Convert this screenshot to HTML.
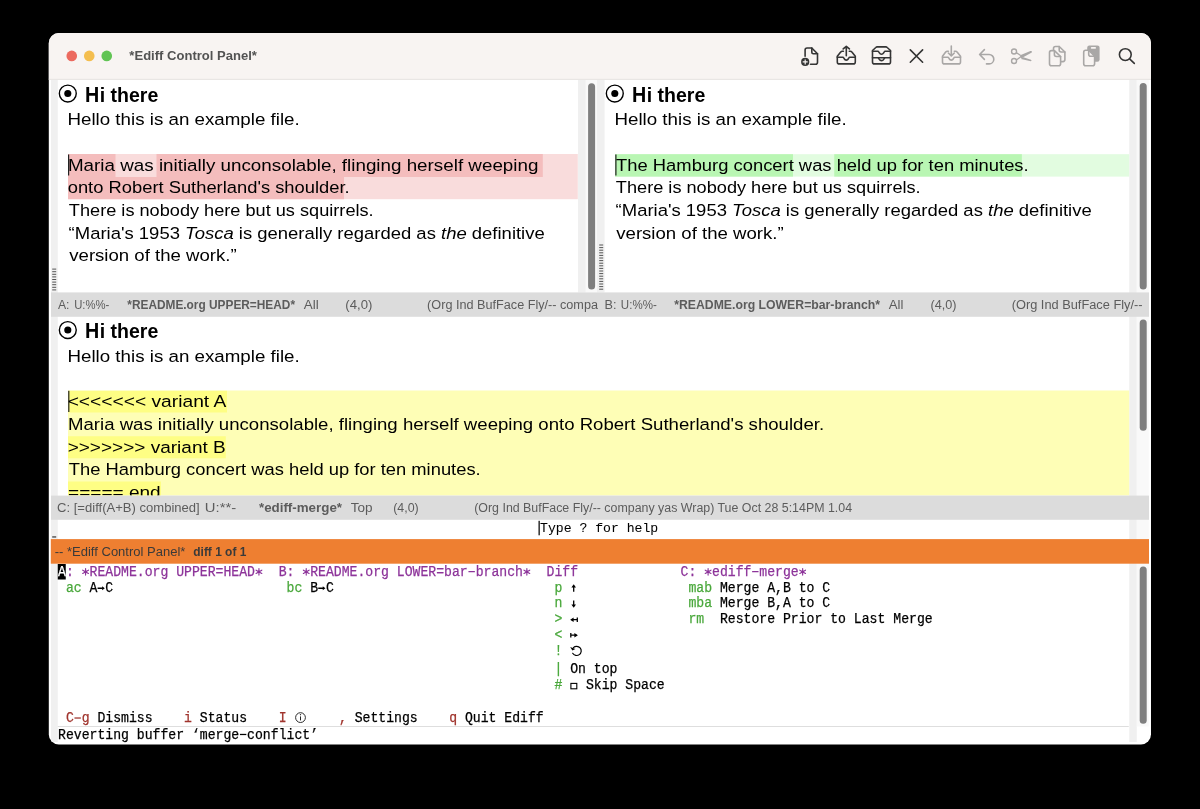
<!DOCTYPE html>
<html><head><meta charset="utf-8"><style>
html,body{margin:0;padding:0;background:#000;width:1200px;height:809px;overflow:hidden}
svg{display:block}
#wrap{will-change:transform;width:1200px;height:809px}
text{font-family:"Liberation Sans",sans-serif}
text.m{font-family:"Liberation Mono",monospace;white-space:pre}
</style></head><body>
<div id="wrap"><svg width="1200" height="809" viewBox="0 0 1200 809">
<rect x="0" y="0" width="1200" height="809" fill="#000"/>
<clipPath id="win"><rect x="48.8" y="33" width="1102.2" height="711.5" rx="10" ry="10"/></clipPath>
<g clip-path="url(#win)">
<rect x="48" y="33" width="1104" height="712" fill="#ffffff" />
<rect x="48" y="33" width="1104" height="46.5" fill="#f8f4f2" />
<rect x="48" y="78.8" width="1104" height="1.2" fill="#e9e6e4" />
<circle cx="71.75" cy="55.9" r="5.3" fill="#ec6a5f"/>
<circle cx="89.25" cy="55.9" r="5.3" fill="#f4be4f"/>
<circle cx="106.75" cy="55.9" r="5.3" fill="#61c454"/>
<text x="129.36" y="60" font-size="13" fill="#535353" textLength="127.55" lengthAdjust="spacingAndGlyphs" ><tspan font-weight="bold">*Ediff Control Panel*</tspan></text>
<rect x="51" y="80" width="6.8" height="662" fill="#f0f0f0" />
<rect x="578" y="80" width="7.8" height="212.5" fill="#f0f0f0" />
<rect x="585.8" y="80" width="11.2" height="212.5" fill="#f9f9f9" />
<rect x="597" y="80" width="7.6" height="212.5" fill="#f0f0f0" />
<rect x="1129.2" y="80" width="7.6" height="662" fill="#f0f0f0" />
<rect x="1136.8" y="80" width="12" height="646.5" fill="#f9f9f9" />
<rect x="68" y="154" width="509.8" height="45.2" fill="#f9dcdc" />
<rect x="68" y="154" width="474.8" height="23" fill="#f4bdbd" />
<rect x="115.5" y="154" width="41" height="23" fill="#f9dcdc" />
<rect x="68" y="177" width="276" height="22.2" fill="#f4bdbd" />
<rect x="615" y="154.2" width="514.2" height="22.4" fill="#e2fce0" />
<rect x="615" y="154.2" width="178" height="22.4" fill="#b9f6b3" />
<rect x="834.25" y="154.2" width="187.6" height="22.4" fill="#b9f6b3" />
<rect x="68" y="154.5" width="1.2" height="21" fill="#222" />
<rect x="615.3" y="154.5" width="1.2" height="21" fill="#222" />
<circle cx="67.8" cy="93.55" r="8.45" fill="none" stroke="#000" stroke-width="1.4"/>
<circle cx="67.8" cy="93.55" r="3.55" fill="#000"/>
<text x="85.08" y="101.9" font-size="22.4" fill="#000" textLength="14.25" lengthAdjust="spacingAndGlyphs" ><tspan font-weight="bold">H</tspan></text>
<text x="99.64" y="101.9" font-size="20.6" fill="#000" textLength="58.63" lengthAdjust="spacingAndGlyphs" ><tspan font-weight="bold">i there</tspan></text>
<text x="67.46" y="125" font-size="17.4" fill="#000" textLength="232.25" lengthAdjust="spacingAndGlyphs" >Hello this is an example file.</text>
<text x="67.96" y="170.5" font-size="17.4" fill="#000" textLength="470.46" lengthAdjust="spacingAndGlyphs" >Maria was initially unconsolable, flinging herself weeping</text>
<text x="67.73" y="193.2" font-size="17.4" fill="#000" textLength="281.94" lengthAdjust="spacingAndGlyphs" >onto Robert Sutherland&#x27;s shoulder.</text>
<text x="68.89" y="215.8" font-size="17.4" fill="#000" textLength="304.77" lengthAdjust="spacingAndGlyphs" >There is nobody here but us squirrels.</text>
<text x="68.63" y="238.7" font-size="17.4" fill="#000" textLength="476.09" lengthAdjust="spacingAndGlyphs" >“Maria&#x27;s 1953 <tspan font-style="italic">Tosca</tspan> is generally regarded as <tspan font-style="italic">the</tspan> definitive</text>
<text x="69.24" y="260.8" font-size="17.4" fill="#000" textLength="167.44" lengthAdjust="spacingAndGlyphs" >version of the work.”</text>
<circle cx="614.8" cy="93.55" r="8.45" fill="none" stroke="#000" stroke-width="1.4"/>
<circle cx="614.8" cy="93.55" r="3.55" fill="#000"/>
<text x="632.08" y="101.9" font-size="22.4" fill="#000" textLength="14.25" lengthAdjust="spacingAndGlyphs" ><tspan font-weight="bold">H</tspan></text>
<text x="646.64" y="101.9" font-size="20.6" fill="#000" textLength="58.63" lengthAdjust="spacingAndGlyphs" ><tspan font-weight="bold">i there</tspan></text>
<text x="614.46" y="125" font-size="17.4" fill="#000" textLength="232.25" lengthAdjust="spacingAndGlyphs" >Hello this is an example file.</text>
<text x="616.09" y="170.5" font-size="17.4" fill="#000" textLength="412.59" lengthAdjust="spacingAndGlyphs" >The Hamburg concert was held up for ten minutes.</text>
<text x="615.89" y="193.2" font-size="17.4" fill="#000" textLength="304.77" lengthAdjust="spacingAndGlyphs" >There is nobody here but us squirrels.</text>
<text x="615.63" y="215.8" font-size="17.4" fill="#000" textLength="476.09" lengthAdjust="spacingAndGlyphs" >“Maria&#x27;s 1953 <tspan font-style="italic">Tosca</tspan> is generally regarded as <tspan font-style="italic">the</tspan> definitive</text>
<text x="616.24" y="238.7" font-size="17.4" fill="#000" textLength="167.44" lengthAdjust="spacingAndGlyphs" >version of the work.”</text>
<rect x="52.2" y="268.6" width="4" height="1" fill="#555" />
<rect x="52.2" y="271.2" width="4" height="1" fill="#555" />
<rect x="52.2" y="273.8" width="4" height="1" fill="#555" />
<rect x="52.2" y="276.4" width="4" height="1" fill="#555" />
<rect x="52.2" y="279.0" width="4" height="1" fill="#555" />
<rect x="52.2" y="281.6" width="4" height="1" fill="#555" />
<rect x="52.2" y="284.2" width="4" height="1" fill="#555" />
<rect x="52.2" y="286.8" width="4" height="1" fill="#555" />
<rect x="52.2" y="289.4" width="4" height="1" fill="#555" />
<rect x="599.2" y="244.5" width="4" height="1" fill="#555" />
<rect x="599.2" y="247.1" width="4" height="1" fill="#555" />
<rect x="599.2" y="249.7" width="4" height="1" fill="#555" />
<rect x="599.2" y="252.3" width="4" height="1" fill="#555" />
<rect x="599.2" y="254.9" width="4" height="1" fill="#555" />
<rect x="599.2" y="257.5" width="4" height="1" fill="#555" />
<rect x="599.2" y="260.1" width="4" height="1" fill="#555" />
<rect x="599.2" y="262.7" width="4" height="1" fill="#555" />
<rect x="599.2" y="265.3" width="4" height="1" fill="#555" />
<rect x="599.2" y="267.9" width="4" height="1" fill="#555" />
<rect x="599.2" y="270.5" width="4" height="1" fill="#555" />
<rect x="599.2" y="273.1" width="4" height="1" fill="#555" />
<rect x="599.2" y="275.7" width="4" height="1" fill="#555" />
<rect x="599.2" y="278.3" width="4" height="1" fill="#555" />
<rect x="599.2" y="280.9" width="4" height="1" fill="#555" />
<rect x="599.2" y="283.5" width="4" height="1" fill="#555" />
<rect x="599.2" y="286.1" width="4" height="1" fill="#555" />
<rect x="599.2" y="288.7" width="4" height="1" fill="#555" />
<rect x="588.1" y="83.2" width="7" height="206.3" rx="3.5" fill="#7f7f7f"/>
<rect x="1139.7" y="83" width="7" height="206.60000000000002" rx="3.5" fill="#7f7f7f"/>
<rect x="1139.7" y="319.6" width="7" height="111.19999999999999" rx="3.5" fill="#7f7f7f"/>
<rect x="1139.7" y="566.5" width="7" height="157.29999999999995" rx="3.5" fill="#7f7f7f"/>
<rect x="51" y="292.4" width="1098" height="24.4" fill="#dcdcdc" />
<text x="57.98" y="308.75" font-size="12" fill="#5c5c5c" textLength="11.54" lengthAdjust="spacingAndGlyphs" >A:</text>
<text x="74.13" y="308.75" font-size="12" fill="#5c5c5c" textLength="35.17" lengthAdjust="spacingAndGlyphs" >U:%%-</text>
<text x="127.32" y="308.75" font-size="12" fill="#5c5c5c" textLength="167.70" lengthAdjust="spacingAndGlyphs" ><tspan font-weight="bold">*README.org UPPER=HEAD*</tspan></text>
<text x="303.77" y="308.75" font-size="12" fill="#5c5c5c" textLength="14.92" lengthAdjust="spacingAndGlyphs" >All</text>
<text x="345.38" y="308.75" font-size="12" fill="#5c5c5c" textLength="27.03" lengthAdjust="spacingAndGlyphs" >(4,0)</text>
<clipPath id="mlA"><rect x="51" y="292" width="547" height="25"/></clipPath>
<text x="427.12" y="308.75" font-size="12" fill="#5c5c5c" textLength="170.88" lengthAdjust="spacingAndGlyphs" clip-path="url(#mlA)">(Org Ind BufFace Fly/-- compa</text>
<text x="604.46" y="308.75" font-size="12" fill="#5c5c5c" textLength="11.94" lengthAdjust="spacingAndGlyphs" >B:</text>
<text x="620.86" y="308.75" font-size="12" fill="#5c5c5c" textLength="35.90" lengthAdjust="spacingAndGlyphs" >U:%%-</text>
<text x="674.21" y="308.75" font-size="12" fill="#5c5c5c" textLength="205.80" lengthAdjust="spacingAndGlyphs" ><tspan font-weight="bold">*README.org LOWER=bar-branch*</tspan></text>
<text x="888.72" y="308.75" font-size="12" fill="#5c5c5c" textLength="14.66" lengthAdjust="spacingAndGlyphs" >All</text>
<text x="930.46" y="308.75" font-size="12" fill="#5c5c5c" textLength="26.07" lengthAdjust="spacingAndGlyphs" >(4,0)</text>
<text x="1011.71" y="308.75" font-size="12" fill="#5c5c5c" textLength="130.86" lengthAdjust="spacingAndGlyphs" >(Org Ind BufFace Fly/--</text>
<rect x="68" y="390.5" width="1061.2" height="105" fill="#fefeb6" />
<rect x="68" y="390.8" width="159" height="21.7" fill="#fefe84" />
<rect x="68" y="436.25" width="157.8" height="22.05" fill="#fefe84" />
<rect x="68" y="481.5" width="93" height="14" fill="#fefe84" />
<rect x="68.2" y="390.8" width="1.2" height="21.2" fill="#222" />
<circle cx="67.8" cy="330.05" r="8.45" fill="none" stroke="#000" stroke-width="1.4"/>
<circle cx="67.8" cy="330.05" r="3.55" fill="#000"/>
<text x="85.08" y="338.4" font-size="22.4" fill="#000" textLength="14.25" lengthAdjust="spacingAndGlyphs" ><tspan font-weight="bold">H</tspan></text>
<text x="99.64" y="338.4" font-size="20.6" fill="#000" textLength="58.63" lengthAdjust="spacingAndGlyphs" ><tspan font-weight="bold">i there</tspan></text>
<text x="67.46" y="361.5" font-size="17.4" fill="#000" textLength="232.25" lengthAdjust="spacingAndGlyphs" >Hello this is an example file.</text>
<text x="67.66" y="407" font-size="17.4" fill="#000" textLength="158.58" lengthAdjust="spacingAndGlyphs" >&lt;&lt;&lt;&lt;&lt;&lt;&lt; variant A</text>
<text x="67.98" y="429.7" font-size="17.4" fill="#000" textLength="756.12" lengthAdjust="spacingAndGlyphs" >Maria was initially unconsolable, flinging herself weeping onto Robert Sutherland&#x27;s shoulder.</text>
<text x="67.66" y="452.6" font-size="17.4" fill="#000" textLength="158.09" lengthAdjust="spacingAndGlyphs" >&gt;&gt;&gt;&gt;&gt;&gt;&gt; variant B</text>
<text x="68.89" y="475" font-size="17.4" fill="#000" textLength="411.79" lengthAdjust="spacingAndGlyphs" >The Hamburg concert was held up for ten minutes.</text>
<clipPath id="pc"><rect x="51" y="316" width="1080" height="179.5"/></clipPath>
<text x="68.07" y="497.7" font-size="17.4" fill="#000" textLength="92.66" lengthAdjust="spacingAndGlyphs" clip-path="url(#pc)">===== end</text>
<rect x="51" y="495.6" width="1098" height="24.2" fill="#dcdcdc" />
<text x="57.09" y="512" font-size="12" fill="#5c5c5c" textLength="142.64" lengthAdjust="spacingAndGlyphs" >C: [=diff(A+B) combined]</text>
<text x="204.86" y="512" font-size="12" fill="#5c5c5c" textLength="31.30" lengthAdjust="spacingAndGlyphs" >U:**-</text>
<text x="258.96" y="512" font-size="12" fill="#5c5c5c" textLength="83.05" lengthAdjust="spacingAndGlyphs" ><tspan font-weight="bold">*ediff-merge*</tspan></text>
<text x="350.72" y="512" font-size="12" fill="#5c5c5c" textLength="21.82" lengthAdjust="spacingAndGlyphs" >Top</text>
<text x="393.23" y="512" font-size="12" fill="#5c5c5c" textLength="25.54" lengthAdjust="spacingAndGlyphs" >(4,0)</text>
<text x="474.23" y="512" font-size="12" fill="#5c5c5c" textLength="377.83" lengthAdjust="spacingAndGlyphs" >(Org Ind BufFace Fly/-- company yas Wrap) Tue Oct 28 5:14PM 1.04</text>
<rect x="538.5" y="520.8" width="1.3" height="14.5" fill="#111" />
<text class="m" x="540.00" y="532" font-size="12.6" fill="#000" stroke="#000" stroke-width="0.05" textLength="118.20" lengthAdjust="spacingAndGlyphs" >Type ? for help</text>
<rect x="52.2" y="536.3" width="4" height="1.3" fill="#444" />
<rect x="50.8" y="539.1" width="1098.2" height="24.6" fill="#ee7f31" />
<text x="54.72" y="556" font-size="12" fill="#3a3a3a" textLength="130.68" lengthAdjust="spacingAndGlyphs" >-- *Ediff Control Panel*</text>
<text x="193.31" y="556" font-size="12" fill="#3a3a3a" textLength="53.02" lengthAdjust="spacingAndGlyphs" ><tspan font-weight="bold">diff 1 of 1</tspan></text>
<rect x="57.75" y="564" width="8" height="15.5" fill="#000" />
<text class="m" x="58.00" y="575.9" font-size="13.9" fill="#fff" stroke="#fff" stroke-width="0.25" textLength="7.88" lengthAdjust="spacingAndGlyphs" >A</text>
<path d="M85.58,568.50L85.58,575.10M88.44,570.15L82.72,573.45M88.44,573.45L82.72,570.15" stroke="#8d349a" stroke-width="1.15" stroke-linecap="round"/>
<circle cx="85.58" cy="571.80" r="1.2" fill="#8d349a"/>
<path d="M258.94,568.50L258.94,575.10M261.80,570.15L256.08,573.45M261.80,573.45L256.08,570.15" stroke="#8d349a" stroke-width="1.15" stroke-linecap="round"/>
<circle cx="258.94" cy="571.80" r="1.2" fill="#8d349a"/>
<text class="m" x="65.88" y="575.9" font-size="13.9" fill="#8d349a" stroke="#8d349a" stroke-width="0.25" textLength="15.76" lengthAdjust="spacingAndGlyphs" >: </text>
<text class="m" x="89.52" y="575.9" font-size="13.9" fill="#8d349a" stroke="#8d349a" stroke-width="0.25" textLength="165.48" lengthAdjust="spacingAndGlyphs" >README.org UPPER=HEAD</text>
<path d="M306.22,568.50L306.22,575.10M309.08,570.15L303.36,573.45M309.08,573.45L303.36,570.15" stroke="#8d349a" stroke-width="1.15" stroke-linecap="round"/>
<circle cx="306.22" cy="571.80" r="1.2" fill="#8d349a"/>
<rect x="468.46" y="571.00" width="6.4" height="1.25" fill="#8d349a"/>
<path d="M526.86,568.50L526.86,575.10M529.72,570.15L524.00,573.45M529.72,573.45L524.00,570.15" stroke="#8d349a" stroke-width="1.15" stroke-linecap="round"/>
<circle cx="526.86" cy="571.80" r="1.2" fill="#8d349a"/>
<text class="m" x="278.64" y="575.9" font-size="13.9" fill="#8d349a" stroke="#8d349a" stroke-width="0.25" textLength="23.64" lengthAdjust="spacingAndGlyphs" >B: </text>
<text class="m" x="310.16" y="575.9" font-size="13.9" fill="#8d349a" stroke="#8d349a" stroke-width="0.25" textLength="157.60" lengthAdjust="spacingAndGlyphs" >README.org LOWER=bar</text>
<text class="m" x="475.64" y="575.9" font-size="13.9" fill="#8d349a" stroke="#8d349a" stroke-width="0.25" textLength="47.28" lengthAdjust="spacingAndGlyphs" >branch</text>
<text class="m" x="546.56" y="575.9" font-size="13.9" fill="#8d349a" stroke="#8d349a" stroke-width="0.25" textLength="31.52" lengthAdjust="spacingAndGlyphs" >Diff</text>
<path d="M708.10,568.50L708.10,575.10M710.96,570.15L705.24,573.45M710.96,573.45L705.24,570.15" stroke="#8d349a" stroke-width="1.15" stroke-linecap="round"/>
<circle cx="708.10" cy="571.80" r="1.2" fill="#8d349a"/>
<rect x="752.14" y="571.00" width="6.4" height="1.25" fill="#8d349a"/>
<path d="M802.66,568.50L802.66,575.10M805.52,570.15L799.80,573.45M805.52,573.45L799.80,570.15" stroke="#8d349a" stroke-width="1.15" stroke-linecap="round"/>
<circle cx="802.66" cy="571.80" r="1.2" fill="#8d349a"/>
<text class="m" x="680.52" y="575.9" font-size="13.9" fill="#8d349a" stroke="#8d349a" stroke-width="0.25" textLength="23.64" lengthAdjust="spacingAndGlyphs" >C: </text>
<text class="m" x="712.04" y="575.9" font-size="13.9" fill="#8d349a" stroke="#8d349a" stroke-width="0.25" textLength="39.40" lengthAdjust="spacingAndGlyphs" >ediff</text>
<text class="m" x="759.32" y="575.9" font-size="13.9" fill="#8d349a" stroke="#8d349a" stroke-width="0.25" textLength="39.40" lengthAdjust="spacingAndGlyphs" >merge</text>
<text class="m" x="65.88" y="591.6" font-size="13.9" fill="#4aa83c" stroke="#4aa83c" stroke-width="0.25" textLength="15.76" lengthAdjust="spacingAndGlyphs" >ac</text>
<text class="m" x="89.52" y="591.6" font-size="13.9" fill="#000" stroke="#000" stroke-width="0.25" textLength="7.88" lengthAdjust="spacingAndGlyphs" >A</text>
<text class="m" x="105.28" y="591.6" font-size="13.9" fill="#000" stroke="#000" stroke-width="0.25" textLength="7.88" lengthAdjust="spacingAndGlyphs" >C</text>
<text class="m" x="286.52" y="591.6" font-size="13.9" fill="#4aa83c" stroke="#4aa83c" stroke-width="0.25" textLength="15.76" lengthAdjust="spacingAndGlyphs" >bc</text>
<text class="m" x="310.16" y="591.6" font-size="13.9" fill="#000" stroke="#000" stroke-width="0.25" textLength="7.88" lengthAdjust="spacingAndGlyphs" >B</text>
<text class="m" x="325.92" y="591.6" font-size="13.9" fill="#000" stroke="#000" stroke-width="0.25" textLength="7.88" lengthAdjust="spacingAndGlyphs" >C</text>
<path d="M97.60,588.25 H102.70" stroke="#000" stroke-width="1.35"/><path d="M102.10,586.2 L104.80,588.25 L102.10,590.3 Z" fill="#000"/>
<path d="M318.24,588.25 H323.34" stroke="#000" stroke-width="1.35"/><path d="M322.74,586.2 L325.44,588.25 L322.74,590.3 Z" fill="#000"/>
<text class="m" x="554.44" y="591.6" font-size="13.9" fill="#4aa83c" stroke="#4aa83c" stroke-width="0.25" textLength="7.88" lengthAdjust="spacingAndGlyphs" >p</text>
<text class="m" x="554.44" y="607.35" font-size="13.9" fill="#4aa83c" stroke="#4aa83c" stroke-width="0.25" textLength="7.88" lengthAdjust="spacingAndGlyphs" >n</text>
<text class="m" x="554.44" y="623.1" font-size="13.9" fill="#4aa83c" stroke="#4aa83c" stroke-width="0.25" textLength="7.88" lengthAdjust="spacingAndGlyphs" >&gt;</text>
<text class="m" x="554.44" y="638.85" font-size="13.9" fill="#4aa83c" stroke="#4aa83c" stroke-width="0.25" textLength="7.88" lengthAdjust="spacingAndGlyphs" >&lt;</text>
<text class="m" x="554.44" y="654.6" font-size="13.9" fill="#4aa83c" stroke="#4aa83c" stroke-width="0.25" textLength="7.88" lengthAdjust="spacingAndGlyphs" >!</text>
<text class="m" x="554.44" y="673.1" font-size="13.9" fill="#4aa83c" stroke="#4aa83c" stroke-width="0.25" textLength="7.88" lengthAdjust="spacingAndGlyphs" >|</text>
<text class="m" x="554.44" y="688.9" font-size="13.9" fill="#4aa83c" stroke="#4aa83c" stroke-width="0.25" textLength="7.88" lengthAdjust="spacingAndGlyphs" >#</text>
<path d="M573.7,591.8 V586.5" stroke="#000" stroke-width="1.3"/><path d="M571.4000000000001,587.4 L573.7,584.2 L576.0,587.4 Z" fill="#000"/>
<path d="M573.7,600.5 V605.6" stroke="#000" stroke-width="1.3"/><path d="M571.4000000000001,604.6 L573.7,607.8 L576.0,604.6 Z" fill="#000"/>
<path d="M571.5,619.7 H577.2 M577.3,617.5 V621.9" stroke="#000" stroke-width="1.3"/><path d="M573.6,617.4 L570.2,619.7 L573.6,622 Z" fill="#000"/>
<path d="M570.8,635.2 H576.4 M570.8,633 V637.4" stroke="#000" stroke-width="1.3"/><path d="M574.4,632.9 L577.9,635.2 L574.4,637.5 Z" fill="#000"/>
<path d="M573.4,647.6 A4.6,4.6 0 1 1 572.7,653.3" fill="none" stroke="#000" stroke-width="1.2" stroke-linecap="round"/><path d="M570.2,646.9 L575.4,649.0 L572.4,650.4 Z" fill="#000"/>
<text class="m" x="570.20" y="673.1" font-size="13.9" fill="#000" stroke="#000" stroke-width="0.25" textLength="47.28" lengthAdjust="spacingAndGlyphs" >On top</text>
<rect x="570.9" y="683.4" width="5.9" height="5.4" fill="none" stroke="#000" stroke-width="1.1"/>
<text class="m" x="585.96" y="688.9" font-size="13.9" fill="#000" stroke="#000" stroke-width="0.25" textLength="78.80" lengthAdjust="spacingAndGlyphs" >Skip Space</text>
<text class="m" x="688.40" y="591.6" font-size="13.9" fill="#4aa83c" stroke="#4aa83c" stroke-width="0.25" textLength="23.64" lengthAdjust="spacingAndGlyphs" >mab</text>
<text class="m" x="719.92" y="591.6" font-size="13.9" fill="#000" stroke="#000" stroke-width="0.25" textLength="110.32" lengthAdjust="spacingAndGlyphs" >Merge A,B to C</text>
<text class="m" x="688.40" y="607.35" font-size="13.9" fill="#4aa83c" stroke="#4aa83c" stroke-width="0.25" textLength="23.64" lengthAdjust="spacingAndGlyphs" >mba</text>
<text class="m" x="719.92" y="607.35" font-size="13.9" fill="#000" stroke="#000" stroke-width="0.25" textLength="110.32" lengthAdjust="spacingAndGlyphs" >Merge B,A to C</text>
<text class="m" x="688.40" y="623.1" font-size="13.9" fill="#4aa83c" stroke="#4aa83c" stroke-width="0.25" textLength="15.76" lengthAdjust="spacingAndGlyphs" >rm</text>
<text class="m" x="719.92" y="623.1" font-size="13.9" fill="#000" stroke="#000" stroke-width="0.25" textLength="212.76" lengthAdjust="spacingAndGlyphs" >Restore Prior to Last Merge</text>
<rect x="74.46" y="717.40" width="6.4" height="1.25" fill="#a0342d"/>
<text class="m" x="65.88" y="722.3" font-size="13.9" fill="#a0342d" stroke="#a0342d" stroke-width="0.25" textLength="7.88" lengthAdjust="spacingAndGlyphs" >C</text>
<text class="m" x="81.64" y="722.3" font-size="13.9" fill="#a0342d" stroke="#a0342d" stroke-width="0.25" textLength="7.88" lengthAdjust="spacingAndGlyphs" >g</text>
<text class="m" x="97.40" y="722.3" font-size="13.9" fill="#000" stroke="#000" stroke-width="0.25" textLength="55.16" lengthAdjust="spacingAndGlyphs" >Dismiss</text>
<text class="m" x="184.08" y="722.3" font-size="13.9" fill="#a0342d" stroke="#a0342d" stroke-width="0.25" textLength="7.88" lengthAdjust="spacingAndGlyphs" >i</text>
<text class="m" x="199.84" y="722.3" font-size="13.9" fill="#000" stroke="#000" stroke-width="0.25" textLength="47.28" lengthAdjust="spacingAndGlyphs" >Status</text>
<text class="m" x="278.64" y="722.3" font-size="13.9" fill="#a0342d" stroke="#a0342d" stroke-width="0.25" textLength="7.88" lengthAdjust="spacingAndGlyphs" >I</text>
<circle cx="300.5" cy="717.6" r="4.9" fill="none" stroke="#222" stroke-width="0.95"/><path d="M300.5,716.4 V720.4" stroke="#222" stroke-width="1.0" fill="none"/><circle cx="300.5" cy="714.7" r="0.65" fill="#222"/>
<text class="m" x="338.88" y="722.3" font-size="13.9" fill="#a0342d" stroke="#a0342d" stroke-width="0.25" textLength="7.88" lengthAdjust="spacingAndGlyphs" >,</text>
<text class="m" x="354.64" y="722.3" font-size="13.9" fill="#000" stroke="#000" stroke-width="0.25" textLength="63.04" lengthAdjust="spacingAndGlyphs" >Settings</text>
<text class="m" x="449.20" y="722.3" font-size="13.9" fill="#a0342d" stroke="#a0342d" stroke-width="0.25" textLength="7.88" lengthAdjust="spacingAndGlyphs" >q</text>
<text class="m" x="464.96" y="722.3" font-size="13.9" fill="#000" stroke="#000" stroke-width="0.25" textLength="78.80" lengthAdjust="spacingAndGlyphs" >Quit Ediff</text>
<rect x="57.75" y="726" width="1071" height="1" fill="#dedede" />
<rect x="239.94" y="733.85" width="6.4" height="1.25" fill="#000"/>
<text class="m" x="58.00" y="738.75" font-size="13.9" fill="#000" stroke="#000" stroke-width="0.25" textLength="181.24" lengthAdjust="spacingAndGlyphs" >Reverting buffer ‘merge</text>
<text class="m" x="247.12" y="738.75" font-size="13.9" fill="#000" stroke="#000" stroke-width="0.25" textLength="70.92" lengthAdjust="spacingAndGlyphs" >conflict’</text>
<g fill="none" stroke="#353535" stroke-width="1.6" stroke-linecap="round" stroke-linejoin="round">
  <!-- new file -->
  <path d="M805.1,56.2 V50 a2,2 0 0 1 2,-2 H811.8 L817.5,53.7 V62.2 a2,2 0 0 1 -2,2 H810.5"/>
  <path d="M811.8,48 V52.2 a1.5,1.5 0 0 0 1.5,1.5 H817.5"/>
  <!-- inbox upload -->
  <path d="M843.4,51.2 H842.3 a2,2 0 0 0 -1.6,0.8 L837.3,56.3 V61.9 a2,2 0 0 0 2,2 H853.3 a2,2 0 0 0 2,-2 V56.3 L851.9,52 a2,2 0 0 0 -1.6,-0.8 H849.3"/>
  <path d="M837.3,57.3 H842.8 a1,1 0 0 1 0.9,0.6 L844.3,58.8 a2.2,2.2 0 0 0 4,0 L848.9,57.9 a1,1 0 0 1 0.9,-0.6 H855.3"/>
  <path d="M846.3,55.8 V46.5 M843.2,48.9 L846.3,46.3 L849.4,48.9"/>
  <!-- archive -->
  <path d="M872.5,50.5 L875.8,47.5 a2,2 0 0 1 1.4,-0.6 H885.8 a2,2 0 0 1 1.4,0.6 L890.5,50.5 V61.9 a2,2 0 0 1 -2,2 H874.5 a2,2 0 0 1 -2,-2 Z"/>
  <path d="M872.5,51.3 H877.8 a1,1 0 0 1 0.9,0.6 L879.5,53 a2.2,2.2 0 0 0 4,0 L884.3,51.9 a1,1 0 0 1 0.9,-0.6 H890.5"/>
  <path d="M872.5,57.75 H890.5"/>
  <path d="M878.4,57.9 L879.3,59.4 a2.6,2.6 0 0 0 4.4,0 L884.6,57.9"/>
  <!-- X -->
  <path d="M910.3,49.9 L922.6,62.2 M922.6,49.9 L910.3,62.2"/>
  <!-- search -->
  <circle cx="1125.3" cy="54.6" r="5.9"/>
  <path d="M1129.6,58.9 L1134.3,63.4"/>
</g>
<g fill="none" stroke="#a9a7a6" stroke-width="1.6" stroke-linecap="round" stroke-linejoin="round">
  <!-- download inbox -->
  <path d="M948.4,51.3 H947.3 a2,2 0 0 0 -1.6,0.8 L942.5,56.3 V61.9 a2,2 0 0 0 2,2 H958.5 a2,2 0 0 0 2,-2 V56.3 L957.1,52.1 a2,2 0 0 0 -1.6,-0.8 H954.3"/>
  <path d="M942.5,57.3 H947.8 a1,1 0 0 1 0.9,0.6 L949.3,58.8 a2.2,2.2 0 0 0 4,0 L953.9,57.9 a1,1 0 0 1 0.9,-0.6 H960.5"/>
  <path d="M951.3,46 V55.6 M948.3,53 L951.3,55.8 L954.3,53"/>
  <!-- undo -->
  <path d="M984.4,49.6 L979.6,54.5 L984.4,59.4 M979.6,54.5 H989.1 a4.7,4.7 0 0 1 0,9.4 H986.5"/>
  <!-- scissors -->
  <circle cx="1014.05" cy="51.5" r="2.5" stroke-width="1.4"/>
  <circle cx="1014.05" cy="61" r="2.5" stroke-width="1.4"/>
  <!-- copy -->
  <path d="M1053.5,50.2 V48.5 a2,2 0 0 1 2,-2 H1059.2 L1064.9,52 V59.6 a2,2 0 0 1 -2,2 H1060.8"/>
  <path d="M1059.2,46.6 V50 a2,2 0 0 0 2,2 H1064.9"/>
  <path d="M1049.5,52.6 a2,2 0 0 1 2,-2 H1054.4 L1060.6,56.5 V63.7 a2,2 0 0 1 -2,2 H1051.5 a2,2 0 0 1 -2,-2 Z" fill="#f8f4f2"/>
  <path d="M1054.4,50.7 V54.5 a2,2 0 0 0 2,2 H1060.6"/>
  <!-- paste front doc -->
</g>
<g fill="#a9a7a6">
  <path d="M1019.6,55.6 L1030.4,51.0 Q1032.4,50.6 1031.8,52.4 L1021.4,58.3 Z"/>
  <path d="M1022.6,56.9 L1031.0,59.8 Q1032.4,60.8 1030.8,61.2 L1021.0,59.0 Z"/>
  <path d="M1016.0,60.2 L1021.2,56.4" stroke="#a9a7a6" stroke-width="1.3" fill="none"/>
  <path d="M1016.2,52.6 L1020.4,55.2" stroke="#a9a7a6" stroke-width="1.3" fill="none"/>
  <rect x="1087.2" y="45.6" width="12.4" height="16.1" rx="2.2"/>
</g>
<rect x="1090.8" y="47.1" width="5.2" height="1.7" rx="0.8" fill="#f8f4f2"/>
<g fill="none" stroke="#a9a7a6" stroke-width="1.6" stroke-linecap="round" stroke-linejoin="round">
  <path d="M1083.7,52.3 a2,2 0 0 1 2,-2 H1088.7 L1094.6,56.3 V63.7 a2,2 0 0 1 -2,2 H1085.7 a2,2 0 0 1 -2,-2 Z" fill="#f8f4f2"/>
  <path d="M1088.7,50.4 V54.3 a2,2 0 0 0 2,2 H1094.6"/>
</g>
<circle cx="805.2" cy="61.9" r="4.1" fill="#353535"/>
<path d="M805.2,59.4 V64.4 M802.7,61.9 H807.7" stroke="#f8f4f2" stroke-width="1.2"/>

</g>
</svg></div>
</body></html>
